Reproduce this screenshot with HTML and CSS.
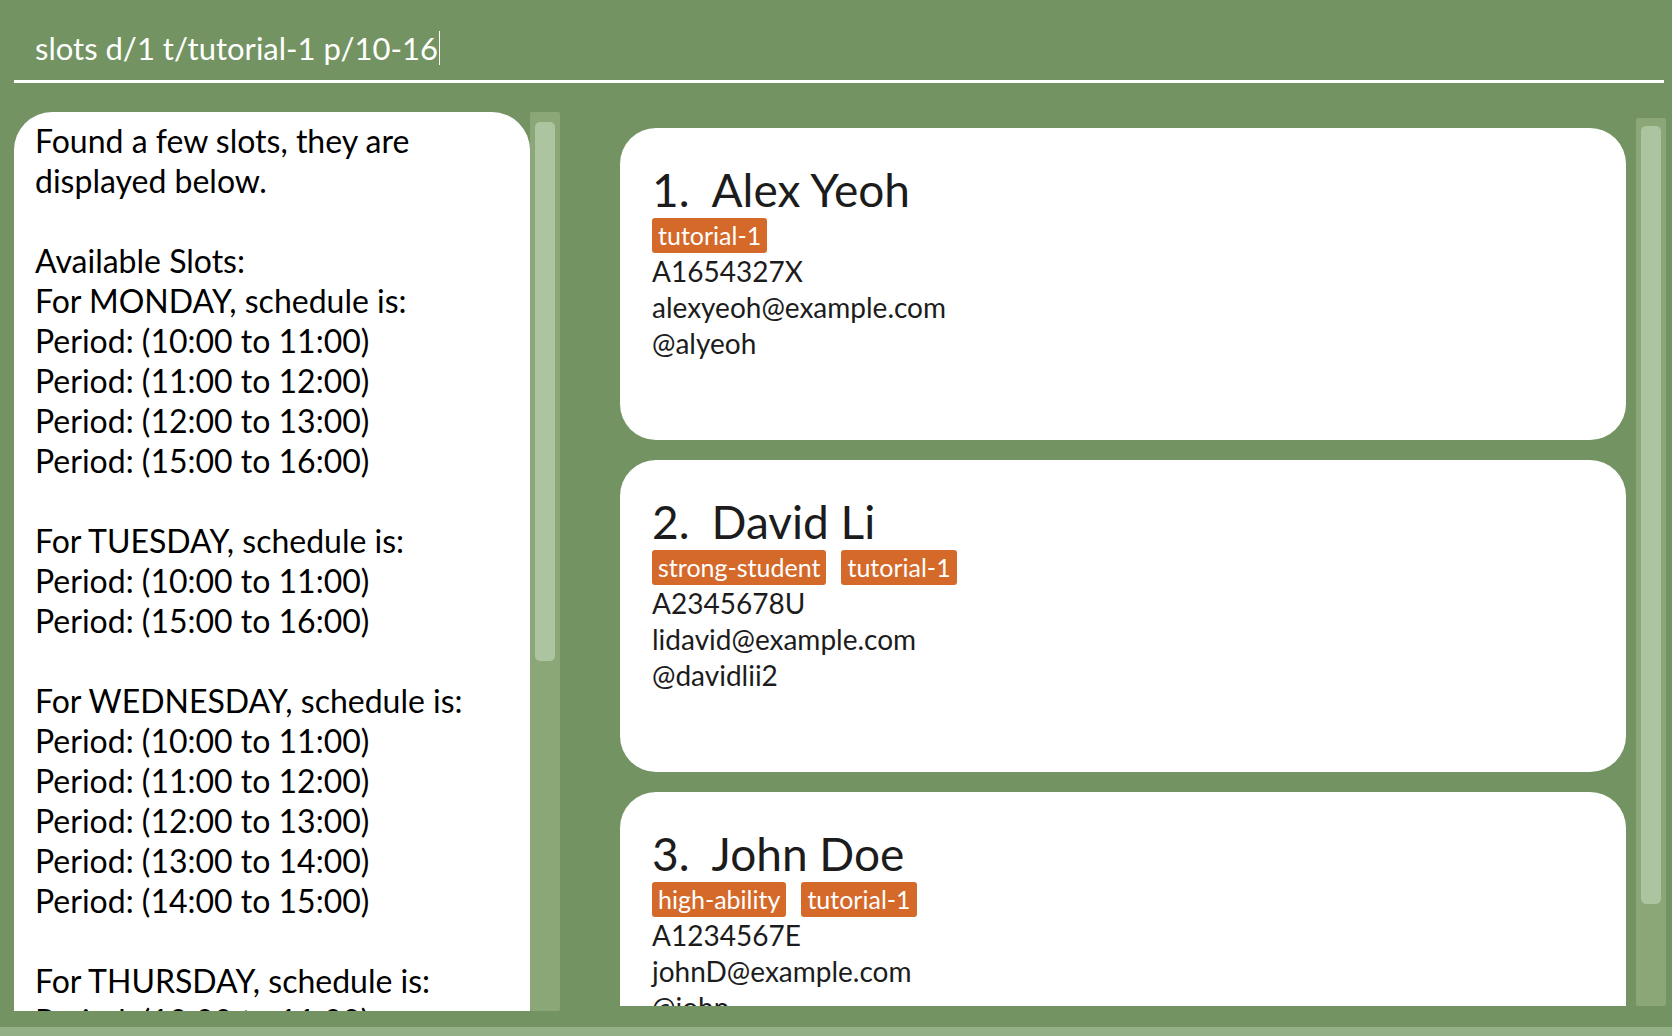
FILE: index.html
```html
<!DOCTYPE html>
<html>
<head>
<meta charset="utf-8">
<link rel="stylesheet" href="styles.css">
</head>
<body>
<div class="app">
  <div class="command">
    <div class="command-text">slots d/1 t/tutorial-1 p/10-16<span class="caret"></span></div>
    <div class="command-line"></div>
  </div>
  <div class="main">
    <div class="result-pane">
      <div class="result-box">
        <div class="result-text">Found a few slots, they are
displayed below.

Available Slots:
For MONDAY, schedule is:
Period: (10:00 to 11:00)
Period: (11:00 to 12:00)
Period: (12:00 to 13:00)
Period: (15:00 to 16:00)

For TUESDAY, schedule is:
Period: (10:00 to 11:00)
Period: (15:00 to 16:00)

For WEDNESDAY, schedule is:
Period: (10:00 to 11:00)
Period: (11:00 to 12:00)
Period: (12:00 to 13:00)
Period: (13:00 to 14:00)
Period: (14:00 to 15:00)

For THURSDAY, schedule is:
Period: (10:00 to 11:00)</div>
      </div>
      <div class="scroll-track left-track"><div class="scroll-thumb left-thumb"></div></div>
    </div>
    <div class="list-pane">
      <div class="card-list">
        <div class="card">
          <div class="name"><span class="idx">1.</span>Alex Yeoh</div>
          <div class="tags"><span class="tag">tutorial-1</span></div>
          <div class="detail">A1654327X</div>
          <div class="detail">alexyeoh@example.com</div>
          <div class="detail">@alyeoh</div>
        </div>
        <div class="card">
          <div class="name"><span class="idx">2.</span>David Li</div>
          <div class="tags"><span class="tag">strong-student</span><span class="tag">tutorial-1</span></div>
          <div class="detail">A2345678U</div>
          <div class="detail">lidavid@example.com</div>
          <div class="detail">@davidlii2</div>
        </div>
        <div class="card">
          <div class="name"><span class="idx">3.</span>John Doe</div>
          <div class="tags"><span class="tag">high-ability</span><span class="tag">tutorial-1</span></div>
          <div class="detail">A1234567E</div>
          <div class="detail">johnD@example.com</div>
          <div class="detail">@john</div>
        </div>
      </div>
      <div class="scroll-track right-track"><div class="scroll-thumb right-thumb"></div></div>
    </div>
  </div>
  <div class="status"></div>
</div>
</body>
</html>
```
FILE: styles.css
```css
html, body {
  margin: 0;
  padding: 0;
}
body {
  width: 1672px;
  height: 1036px;
  overflow: hidden;
  background: #739362;
  font-family: "Lato", "Open Sans", sans-serif;
}
.app {
  display: flex;
  flex-direction: column;
  height: 1036px;
}
.command {
  height: 112px;
  padding: 0 8px 0 14px;
  box-sizing: border-box;
}
.command-text {
  color: #fff;
  font-size: 31px;
  padding: 33px 0 0 21px;
  height: 62px;
  box-sizing: border-box;
  line-height: 36px;
  white-space: pre;
  display: flex;
  align-items: center;
}
.caret {
  display: inline-block;
  width: 1px;
  height: 34px;
  background: #fff;
  margin-left: 1px;
}
.command-line {
  margin-top: 18px;
  height: 3px;
  background: #fff;
}
.main {
  flex: 1;
  display: flex;
  padding: 0 6px 0 14px;
  min-height: 0;
}
.result-pane {
  display: flex;
  width: 546px;
  height: 899px;
}
.result-box {
  width: 516px;
  background: #fff;
  border-radius: 38px 38px 0 0;
  overflow: hidden;
}
.result-text {
  white-space: pre;
  font-size: 32px;
  line-height: 40px;
  color: #000;
  padding: 9px 0 0 21px;
}
.scroll-track {
  background: #8ba778;
  width: 30px;
  border-radius: 2px;
  display: flex;
  justify-content: center;
}
.scroll-thumb {
  width: 20px;
  background: #adc4a0;
  border-radius: 5px;
}
.left-thumb {
  margin-top: 10px;
  height: 539px;
}
.list-pane {
  margin-left: 60px;
  margin-top: 6px;
  height: 888px;
  display: flex;
  flex: 1;
}
.card-list {
  width: 1006px;
  margin-right: 10px;
  padding-top: 10px;
  overflow: hidden;
  display: flex;
  flex-direction: column;
  gap: 20px;
}
.card {
  flex: none;
  height: 312px;
  background: #fff;
  border-radius: 36px;
  box-sizing: border-box;
  padding: 36px 0 0 32px;
  color: #1c1c1c;
}
.name {
  font-size: 46px;
  line-height: 52px;
  color: #1c1c1c;
}
.idx {
  margin-right: 22px;
}
.tags {
  display: flex;
  gap: 15px;
  margin-top: 2px;
}
.tag {
  background: #d4692a;
  color: #fff;
  font-size: 25px;
  line-height: 35px;
  height: 35px;
  padding: 0 6px;
  border-radius: 3px;
}
.detail {
  font-size: 28px;
  line-height: 36px;
}
.right-track {
  height: 888px;
}
.right-thumb {
  margin-top: 8px;
  height: 778px;
}
.status {
  height: 9px;
  background: #93af85;
  margin-top: auto;
}
```
